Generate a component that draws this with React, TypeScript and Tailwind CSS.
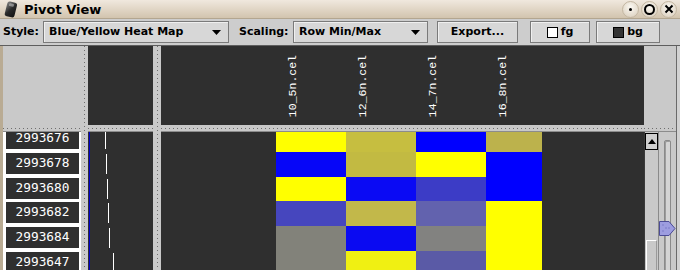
import React from "react";

type Row = { id: string; h: string; bar: number; cells: string[] };

// rows of the heat map, bar = offset of the white tick in the middle panel
const ROWS: Row[] = [
  { id: "2993676", h: "h-[25px]", bar: 15, cells: ["#ffff00", "#c6be40", "#0000ff", "#bcb24c"] },
  { id: "2993678", h: "h-[25px]", bar: 16, cells: ["#0606f8", "#c2ba42", "#ffff00", "#0000ff"] },
  { id: "2993680", h: "h-[24px]", bar: 17, cells: ["#ffff00", "#0a0af4", "#3c3cc6", "#0000ff"] },
  { id: "2993682", h: "h-[25px]", bar: 18, cells: ["#4646be", "#c2b84a", "#6262ae", "#ffff00"] },
  { id: "2993684", h: "h-[25px]", bar: 19, cells: ["#82827a", "#0a0af2", "#828280", "#ffff00"] },
  { id: "2993647", h: "h-[25px]", bar: 23, cells: ["#82827a", "#f0f012", "#5a5aa6", "#ffff00"] },
];

const COLS = [
  { name: "10_5n.cel", w: "w-[70px]" },
  { name: "12_6n.cel", w: "w-[70px]" },
  { name: "14_7n.cel", w: "w-[70px]" },
  { name: "16_8n.cel", w: "w-[56px]" },
];

const HSplit = () => (
  <div className="h-[7px] shrink-0 bg-[#c9c9c9] border-b border-[#8c8c8c] pt-[3px]">
    <div className="h-px bg-[image:repeating-linear-gradient(90deg,#6e6e6e_0_1px,transparent_1px_4px)]" />
  </div>
);

const VSplit = ({ w }: { w: string }) => (
  <div className={`${w} shrink-0 h-full bg-[#c9c9c9] flex justify-center`}>
    <div className="w-px h-full bg-[image:repeating-linear-gradient(180deg,#6e6e6e_0_1px,transparent_1px_4px)]" />
  </div>
);

const Circle = ({ children }: { children: React.ReactNode }) => (
  <div className="w-[17px] h-[17px] rounded-full border border-[#c4b7a2] bg-[radial-gradient(circle_at_50%_35%,#fbf8f2,#d8ccb9)] flex items-center justify-center">
    {children}
  </div>
);

const TitleBar = () => (
  <div className="h-[19px] shrink-0 flex items-center bg-[linear-gradient(#f0e8de,#d2c4ae)] border-b border-[#b3a690]">
    <svg width="18" height="18" viewBox="0 0 18 18" className="ml-[2px]">
      <defs>
        <linearGradient id="ic" x1="0" y1="0" x2="1" y2="1">
          <stop offset="0" stopColor="#8a8a8a" />
          <stop offset="0.5" stopColor="#2a2a2a" />
          <stop offset="1" stopColor="#111" />
        </linearGradient>
      </defs>
      <rect x="4" y="2" width="10" height="15" rx="2.5" fill="url(#ic)" transform="rotate(14 9 9)" />
      <rect x="6" y="3.5" width="5" height="3" rx="1" fill="#bdbdbd" opacity="0.6" transform="rotate(14 9 9)" />
    </svg>
    <span className="ml-[4px] text-[13px] font-bold text-black leading-none">Pivot View</span>
    <div className="ml-auto flex items-center gap-[2px] pr-[3px]">
      <Circle>
        <div className="w-[3px] h-[3px] rounded-full bg-black" />
      </Circle>
      <Circle>
        <div className="w-[11px] h-[11px] rounded-full border-2 border-black" />
      </Circle>
      <Circle>
        <svg width="10" height="10" viewBox="0 0 10 10">
          <path d="M1.5 1.5 L8.5 8.5 M8.5 1.5 L1.5 8.5" stroke="#000" strokeWidth="2" />
        </svg>
      </Circle>
    </div>
  </div>
);

const Combo = ({ w, text }: { w: string; text: string }) => (
  <div className={`${w} h-[22px] flex items-center pl-[5px] pr-[7px] border border-[#7a7a7a] bg-[#d7d7d7] shadow-[inset_1px_1px_0_#efefef]`}>
    <span>{text}</span>
    <svg width="9" height="5" viewBox="0 0 9 5" className="ml-auto">
      <polygon points="0,0 9,0 4.5,5" fill="#000" />
    </svg>
  </div>
);

const Btn = ({ w, ml, children }: { w: string; ml: string; children: React.ReactNode }) => (
  <div className={`${w} ${ml} h-[22px] flex items-center justify-center gap-[3px] border border-[#7a7a7a] bg-[#d7d7d7] shadow-[inset_1px_1px_0_#efefef]`}>
    {children}
  </div>
);

const Toolbar = () => (
  <div className="h-[26px] shrink-0 flex items-center pl-[3px] text-[11px] font-bold text-black">
    <span className="w-[40px]">Style:</span>
    <Combo w="w-[186px]" text="Blue/Yellow Heat Map" />
    <span className="w-[64px] pl-[10px]">Scaling:</span>
    <Combo w="w-[135px]" text="Row Min/Max" />
    <Btn w="w-[81px]" ml="ml-[9px]">Export...</Btn>
    <Btn w="w-[60px]" ml="ml-[12px]">
      <span className="w-[11px] h-[11px] bg-white border border-black" />
      <span>fg</span>
    </Btn>
    <Btn w="w-[64px]" ml="ml-[6px]">
      <span className="w-[11px] h-[11px] bg-[#333] border border-black" />
      <span>bg</span>
    </Btn>
  </div>
);

export default function App() {
  return (
    <div className="w-[680px] h-[270px] overflow-hidden bg-[#cdcdcd] flex flex-col font-['DejaVu_Sans',sans-serif] select-none">
      <TitleBar />
      <Toolbar />
      <div className="flex-1 min-h-0 flex flex-col border-t border-[#5e5e5e]">
        <div className="flex flex-1 min-h-0">
          <div className="w-[3px] shrink-0 bg-[#b9ab93]" />

          {/* row ids */}
          <div className="w-[78px] shrink-0 flex flex-col">
            <div className="h-[79px] shrink-0 bg-[#c9c9c9]" />
            <HSplit />
            <div className="flex-1 overflow-hidden bg-white">
              <div className="-mt-[5px]">
                {ROWS.map((r) => (
                  <div key={r.id} className={`${r.h} pl-[3px] pr-[2px] pt-[1px]`}>
                    <div className="h-[21px] bg-[#2f2f2f] text-white flex items-center justify-center font-['DejaVu_Sans_Mono',monospace] text-[12.8px] leading-none">
                      {r.id}
                    </div>
                  </div>
                ))}
              </div>
            </div>
          </div>

          <VSplit w="w-[7px]" />

          {/* tree / ticks */}
          <div className="w-[65px] shrink-0 flex flex-col">
            <div className="h-[79px] shrink-0 bg-[#2f2f2f]" />
            <HSplit />
            <div className="flex-1 overflow-hidden bg-[#2f2f2f] flex">
              <div className="w-px" />
              <div className="w-px bg-[#0000c8]" />
              <div className="flex-1 -mt-[5px]">
                {ROWS.map((r) => (
                  <div key={r.id} className={`${r.h} pt-[2px]`}>
                    <div className="w-px h-[20px] bg-white" style={{ marginLeft: r.bar }} />
                  </div>
                ))}
              </div>
            </div>
          </div>

          <VSplit w="w-[8px]" />

          {/* heat map */}
          <div className="w-[483px] shrink-0 flex flex-col">
            <div className="h-[79px] shrink-0 bg-[#2f2f2f] flex items-end pl-[115px] pb-[8px]">
              {COLS.map((c) => (
                <div key={c.name} className={`${c.w} pl-[13px]`}>
                  <span className="block [writing-mode:vertical-rl] rotate-180 text-white text-[11.5px] leading-[8px] font-['Liberation_Mono',monospace]">
                    {c.name}
                  </span>
                </div>
              ))}
            </div>
            <HSplit />
            <div className="flex-1 overflow-hidden bg-[#2f2f2f]">
              <div className="-mt-[5px] pl-[115px]">
                {ROWS.map((r) => (
                  <div key={r.id} className={`${r.h} flex`}>
                    {r.cells.map((col, i) => (
                      <div key={i} className={`${COLS[i].w} h-full`} style={{ backgroundColor: col }} />
                    ))}
                  </div>
                ))}
              </div>
            </div>
          </div>

          {/* scroll bar + zoom slider */}
          <div className="w-[32px] shrink-0 flex flex-col">
            <div className="h-[79px] shrink-0 bg-[#c9c9c9]" />
            <HSplit />
            <div className="flex-1 flex bg-[#c9c9c9]">
              <div className="w-[15px] border-l border-[#3a3a3a] border-r border-r-[#8a8a8a] pt-px flex flex-col">
                <div className="h-[17px] border border-black bg-[#cfcfcf] flex items-center justify-center">
                  <svg width="8" height="5" viewBox="0 0 8 5">
                    <polygon points="0,5 8,5 4,0" fill="#000" />
                  </svg>
                </div>
                <div className="mt-[90px] ml-px w-[11px] flex-1 border-l border-t border-white border-r border-r-[#9a9a9a]" />
              </div>
              <div className="relative flex-1">
                <div className="ml-[5px] mt-[8px] w-[7px] h-full rounded-t-[2px] border border-[#8a8a8a] bg-[#d4d4d4] shadow-[inset_1px_1px_0_#9c9c9c]" />
                <svg width="17" height="15" viewBox="0 0 17 15" className="absolute left-0 top-[89px]">
                  <polygon points="0.5,0.5 10,0.5 16,7.5 10,14.5 0.5,14.5" fill="#9d9de0" stroke="#4c4c96" />
                  <circle cx="4" cy="4" r="0.7" fill="#6f6fc0" />
                  <circle cx="7" cy="7" r="0.7" fill="#6f6fc0" />
                  <circle cx="4" cy="10" r="0.7" fill="#6f6fc0" />
                  <circle cx="10" cy="7" r="0.7" fill="#6f6fc0" />
                </svg>
              </div>
            </div>
          </div>

          <div className="w-px shrink-0 bg-[#6a6a6a]" />
          <div className="flex-1 bg-[#d2d2d2]" />
        </div>
      </div>
    </div>
  );
}
